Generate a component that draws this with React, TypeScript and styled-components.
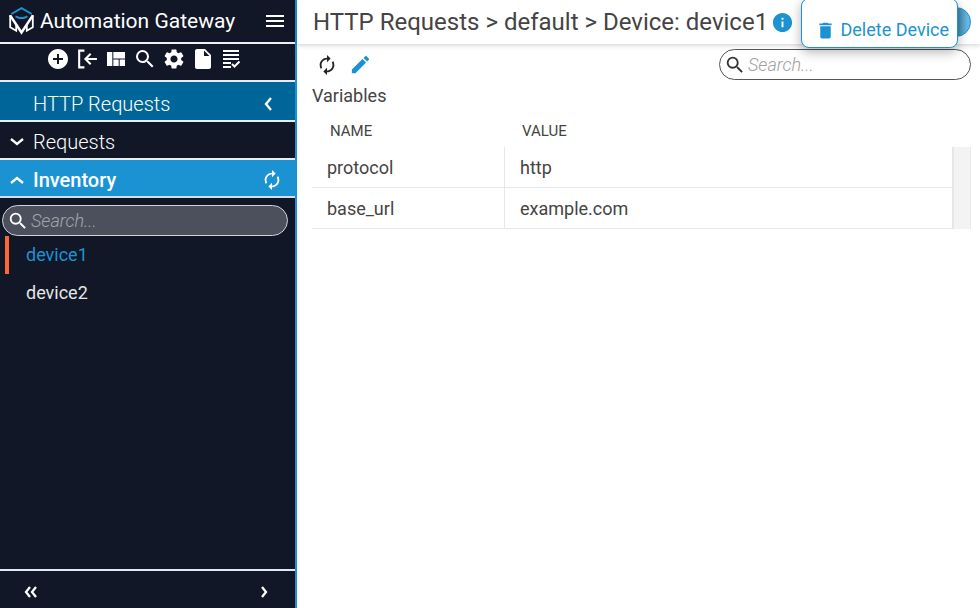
import React from "react";
import styled, { createGlobalStyle, css } from "styled-components";
import {
  MdAddCircle,
  MdAutorenew,
  MdDelete,
  MdEdit,
  MdInfo,
  MdInsertDriveFile,
  MdMenu,
  MdSearch,
  MdSettings,
  MdViewQuilt,
} from "react-icons/md";

const color = {
  navy: "#111726",
  blue: "#1b93d2",
  deep: "#006699",
  text: "#444444",
  line: "#e4e7eb",
  orange: "#ff6633",
};

const Global = createGlobalStyle`
  *, *::before, *::after { box-sizing: border-box; }
  body { margin: 0; background: #fff; color: ${color.text}; font: 400 18px/24px Roboto, sans-serif; }
  button, input { font: inherit; color: inherit; }
  svg { display: block; flex: none; }
`;

const Shell = styled.div`
  display: flex;
  min-height: 100vh;
`;

const Sidebar = styled.aside`
  flex: 0 0 297px;
  display: flex;
  flex-direction: column;
  background: ${color.navy};
  color: #fff;
  border-right: 2px solid ${color.blue};
`;

const Brand = styled.header`
  display: flex;
  align-items: center;
  height: 42px;
  padding: 0 8px 0 9px;
  gap: 6px;
`;

const BrandName = styled.h2`
  flex: 1;
  margin: 0;
  font-size: 21px;
  font-weight: 400;
  white-space: nowrap;
`;

const IconButton = styled.button<{ $tone?: string }>`
  display: flex;
  align-items: center;
  justify-content: center;
  padding: 0;
  border: 0;
  background: none;
  color: ${(p) => p.$tone ?? "inherit"};
  cursor: pointer;
`;

const Toolbar = styled.div`
  display: flex;
  justify-content: center;
  align-items: center;
  gap: 5px;
  height: 38px;
  padding: 0 6px 6px 0;
  border-top: 2px solid #f0f0f4;
`;

const SectionRow = styled.div<{ $kind: "title" | "closed" | "open" }>`
  display: flex;
  align-items: center;
  height: 38px;
  padding: 3px 12px 0 8px;
  border-top: 2px solid #e8edf2;
  background: ${color.navy};
  font-size: 20px;
  font-weight: 300;
  ${(p) =>
    p.$kind === "title" &&
    css`
      height: 40px;
      padding-top: 5px;
      padding-left: 33px;
      padding-right: 18px;
      background: ${color.deep};
    `}
  ${(p) =>
    p.$kind === "open" &&
    css`
      background: ${color.blue};
      font-weight: 500;
    `}
`;

const SectionLabel = styled.span`
  flex: 1;
`;

const SectionToggle = styled.button`
  flex: 1;
  display: flex;
  align-items: center;
  gap: 7px;
  padding: 0;
  border: 0;
  background: none;
  text-align: left;
  cursor: pointer;
`;

const SideContent = styled.div`
  flex: 1;
  border-top: 2px solid #d8dde4;
  padding-top: 7px;
`;

const SearchField = styled.label<{ $dark?: boolean }>`
  display: flex;
  align-items: center;
  gap: 2px;
  height: 31px;
  padding: 0 4px;
  border: 1px solid ${(p) => (p.$dark ? "#d0d2d6" : "#555")};
  border-radius: 16px;
  background: ${(p) => (p.$dark ? "#4c505d" : "#fff")};
  color: ${(p) => (p.$dark ? "#fff" : "#333")};
  ${(p) =>
    p.$dark
      ? css`
          margin: 0 7px 0 2px;
        `
      : css`
          width: 252px;
        `}
`;

const SearchInput = styled.input<{ $dark?: boolean }>`
  flex: 1;
  min-width: 0;
  padding: 0;
  border: 0;
  outline: 0;
  background: transparent;
  font-size: 18px;
  font-weight: 300;
  &::placeholder {
    color: ${(p) => (p.$dark ? "#a3a6ae" : "#a0a0a0")};
    font-style: italic;
    opacity: 1;
  }
`;

const DeviceList = styled.ul`
  margin: 0;
  padding: 0 0 0 5px;
  list-style: none;
`;

const DeviceLink = styled.a<{ $active?: boolean }>`
  display: flex;
  align-items: center;
  height: 38px;
  padding-left: 17px;
  border-left: 4px solid ${(p) => (p.$active ? color.orange : "transparent")};
  color: ${(p) => (p.$active ? color.blue : "#e6e6e6")};
  text-decoration: none;
`;

const SideFooter = styled.footer`
  display: flex;
  align-items: center;
  justify-content: space-between;
  height: 39px;
  padding: 5px 22px 0;
  border-top: 2px solid #dcebf5;
`;

const Main = styled.main`
  flex: 1;
  min-width: 0;
`;

const PageHeader = styled.header`
  position: relative;
  display: flex;
  align-items: center;
  height: 44px;
  padding: 0 9px 0 16px;
  box-shadow: 0 1px 5px rgba(0, 0, 0, 0.2);
`;

const PageTitle = styled.h1`
  margin: 0 3px 0 0;
  font-size: 24px;
  line-height: 28px;
  font-weight: 400;
  white-space: nowrap;
`;

const ActionsButton = styled.button`
  width: 30px;
  height: 30px;
  margin-left: auto;
  padding: 0;
  border: 1px solid ${color.blue};
  border-radius: 50%;
  background: linear-gradient(90deg, #3f86ac 55%, #68b8e4 90%);
  flex: none;
`;

const ActionsMenu = styled.div`
  position: absolute;
  z-index: 1;
  top: -2px;
  right: 22px;
  border: 1px solid ${color.blue};
  border-radius: 8px;
  background: #fff;
  box-shadow: 0 4px 12px rgba(0, 0, 0, 0.3);
`;

const MenuAction = styled.button`
  display: flex;
  align-items: center;
  gap: 5px;
  height: 48px;
  padding: 14px 8px 0 13px;
  border: 0;
  background: none;
  color: ${color.blue};
  font-size: 18px;
  white-space: nowrap;
  cursor: pointer;
`;

const Content = styled.section`
  padding: 5px 9px 0 15px;
`;

const Controls = styled.div`
  display: flex;
  align-items: center;
  gap: 11px;
  padding-left: 4px;
`;

const Spacer = styled.div`
  flex: 1;
`;

const Heading = styled.h3`
  margin: 4px 0 0;
  font-size: 18px;
  font-weight: 400;
`;

const TableFrame = styled.div`
  display: grid;
  grid-template-columns: 1fr 19px;
  margin-top: 6px;
`;

const Table = styled.table`
  width: 100%;
  border-collapse: separate;
  border-spacing: 0;
  table-layout: fixed;
`;

const HeadCell = styled.th<{ $first?: boolean }>`
  width: ${(p) => (p.$first ? "193px" : "auto")};
  height: 33px;
  padding: 0 ${(p) => (p.$first ? "18px" : "17px")};
  font-size: 15px;
  font-weight: 400;
  text-align: left;
`;

const Cell = styled.td<{ $first?: boolean }>`
  height: 41px;
  padding: 2px 15px 0;
  border-bottom: 1px solid ${color.line};
  border-right: ${(p) => (p.$first ? `1px solid ${color.line}` : "0")};
`;

const ScrollGutter = styled.div`
  margin-top: 33px;
  border-left: 2px solid #e6e6e6;
  border-right: 1px solid #e8e8e8;
  background: #f3f3f3;
`;

const Logo = () => (
  <svg width="25" height="29" viewBox="0 0 25 29" fill="none" strokeWidth="2" aria-hidden="true">
    <path d="M2.3 7 12.5 1.2 22.7 7" stroke={color.blue} />
    <path d="M6.5 9.3 10.2 11h4.6l3.7-1.7" stroke={color.blue} />
    <path d="M1.2 8.5 12.5 25.5 23.8 8.5" stroke="#fff" strokeWidth="2.4" />
    <path d="M1.2 8v12.3l6 3.4v-6.2M23.8 8v12.3l-6 3.4v-6.2" stroke="#fff" strokeWidth="1.8" />
  </svg>
);

const CollapseIcon = () => (
  <svg width="24" height="24" viewBox="0 0 23 23" fill="none" stroke="currentColor" strokeWidth="2" aria-hidden="true">
    <path d="M9 3.5H4v16h5M21 11.5H10M15 6.5l-5 5 5 5" />
  </svg>
);

const TaskListIcon = () => (
  <svg width="24" height="24" viewBox="0 0 24 24" fill="none" stroke="currentColor" strokeWidth="2" aria-hidden="true">
    <path d="M3 4h16M3 8h16M3 12h16M3 16h8M3 20h8M12 17l2.5 2.5 5-5" />
  </svg>
);

const chevronPaths = {
  down: "M3 6l6 5 6-5",
  up: "M3 12l6-5 6 5",
  left: "M12 3l-5 6 5 6",
  right: "M7 4l4 5-4 5",
  double: "M8 4l-4 5 4 5M14 4l-4 5 4 5",
};

const Chevron = ({ to }: { to: keyof typeof chevronPaths }) => (
  <svg width="18" height="18" viewBox="0 0 18 18" fill="none" stroke="currentColor" strokeWidth="2.3" aria-hidden="true">
    <path d={chevronPaths[to]} />
  </svg>
);

const tools = [
  { label: "Add", icon: <MdAddCircle size={24} /> },
  { label: "Collapse panel", icon: <CollapseIcon /> },
  { label: "Dashboard", icon: <MdViewQuilt size={24} /> },
  { label: "Search", icon: <MdSearch size={24} /> },
  { label: "Settings", icon: <MdSettings size={24} /> },
  { label: "File", icon: <MdInsertDriveFile size={24} /> },
  { label: "Tasks", icon: <TaskListIcon /> },
];

const devices = ["device1", "device2"];

const variables = [
  { name: "protocol", value: "http" },
  { name: "base_url", value: "example.com" },
];

export default function App() {
  return (
    <Shell>
      <Global />
      <Sidebar>
        <Brand>
          <Logo />
          <BrandName>Automation Gateway</BrandName>
          <IconButton aria-label="Menu">
            <MdMenu size={24} />
          </IconButton>
        </Brand>
        <Toolbar>
          {tools.map((t) => (
            <IconButton key={t.label} aria-label={t.label}>
              {t.icon}
            </IconButton>
          ))}
        </Toolbar>
        <SectionRow $kind="title">
          <SectionLabel>HTTP Requests</SectionLabel>
          <IconButton aria-label="Back">
            <Chevron to="left" />
          </IconButton>
        </SectionRow>
        <SectionRow $kind="closed">
          <SectionToggle aria-expanded={false}>
            <Chevron to="down" />
            Requests
          </SectionToggle>
        </SectionRow>
        <SectionRow $kind="open">
          <SectionToggle aria-expanded={true}>
            <Chevron to="up" />
            Inventory
          </SectionToggle>
          <IconButton aria-label="Refresh inventory">
            <MdAutorenew size={22} />
          </IconButton>
        </SectionRow>
        <SideContent>
          <SearchField $dark>
            <MdSearch size={22} />
            <SearchInput $dark type="text" placeholder="Search..." aria-label="Search devices" />
          </SearchField>
          <DeviceList>
            {devices.map((d, i) => (
              <li key={d}>
                <DeviceLink href={`#${d}`} $active={i === 0}>
                  {d}
                </DeviceLink>
              </li>
            ))}
          </DeviceList>
        </SideContent>
        <SideFooter>
          <IconButton aria-label="Collapse sidebar">
            <Chevron to="double" />
          </IconButton>
          <IconButton aria-label="Next">
            <Chevron to="right" />
          </IconButton>
        </SideFooter>
      </Sidebar>
      <Main>
        <PageHeader>
          <PageTitle>HTTP Requests &gt; default &gt; Device: device1</PageTitle>
          <IconButton aria-label="Information" $tone={color.blue}>
            <MdInfo size={23} />
          </IconButton>
          <ActionsButton aria-label="Actions" />
          <ActionsMenu>
            <MenuAction>
              <MdDelete size={21} />
              Delete Device
            </MenuAction>
          </ActionsMenu>
        </PageHeader>
        <Content>
          <Controls>
            <IconButton aria-label="Refresh variables" $tone="#222">
              <MdAutorenew size={22} />
            </IconButton>
            <IconButton aria-label="Edit variables" $tone={color.blue}>
              <MdEdit size={23} />
            </IconButton>
            <Spacer />
            <SearchField>
              <MdSearch size={22} />
              <SearchInput type="text" placeholder="Search..." aria-label="Search variables" />
            </SearchField>
          </Controls>
          <Heading>Variables</Heading>
          <TableFrame>
            <Table>
              <thead>
                <tr>
                  <HeadCell $first>NAME</HeadCell>
                  <HeadCell>VALUE</HeadCell>
                </tr>
              </thead>
              <tbody>
                {variables.map((v) => (
                  <tr key={v.name}>
                    <Cell $first>{v.name}</Cell>
                    <Cell>{v.value}</Cell>
                  </tr>
                ))}
              </tbody>
            </Table>
            <ScrollGutter />
          </TableFrame>
        </Content>
      </Main>
    </Shell>
  );
}
